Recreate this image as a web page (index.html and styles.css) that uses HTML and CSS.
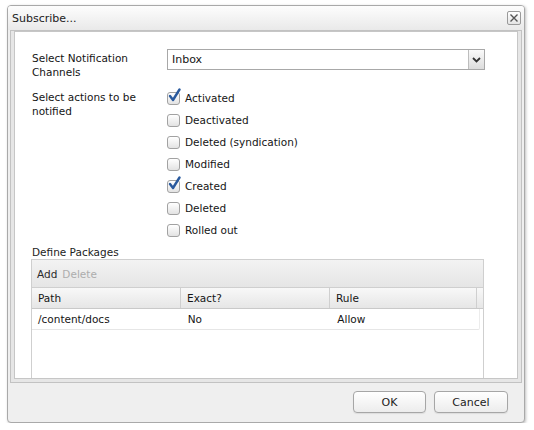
FILE: index.html
```html
<!DOCTYPE html>
<html>
<head>
<meta charset="utf-8">
<title>Subscribe...</title>
<link rel="stylesheet" href="styles.css">
</head>
<body>
<div class="dialog">
  <div class="titlebar">
    <span class="title">Subscribe...</span>
    <span class="close">
      <svg width="10" height="10" viewBox="0 0 10 10"><path d="M1.5 1.5 L8.5 8.5 M8.5 1.5 L1.5 8.5" stroke="#555" stroke-width="1.4" fill="none"/></svg>
    </span>
  </div>
  <div class="body">
    <div class="frame">
      <div class="panel">
        <div class="form-row row-channels">
          <div class="label">Select Notification<br>Channels</div>
          <div class="field">
            <div class="select">
              <span class="select-value">Inbox</span>
              <span class="select-arrow">
                <svg width="9" height="6" viewBox="0 0 9 6"><path d="M1 1 L4.5 4.5 L8 1" stroke="#333" stroke-width="1.8" fill="none"/></svg>
              </span>
            </div>
          </div>
        </div>
        <div class="form-row row-actions">
          <div class="label">Select actions to be<br>notified</div>
          <div class="checks">
            <label class="check"><span class="box checked"><svg width="14" height="15" viewBox="0 0 14 15"><path d="M3 8 L6 12 L12.5 1.5" stroke="#2a5a9e" stroke-width="2.4" fill="none" stroke-linecap="round" stroke-linejoin="round"/></svg></span>Activated</label>
            <label class="check"><span class="box"></span>Deactivated</label>
            <label class="check"><span class="box"></span>Deleted (syndication)</label>
            <label class="check"><span class="box"></span>Modified</label>
            <label class="check"><span class="box checked"><svg width="14" height="15" viewBox="0 0 14 15"><path d="M3 8 L6 12 L12.5 1.5" stroke="#2a5a9e" stroke-width="2.4" fill="none" stroke-linecap="round" stroke-linejoin="round"/></svg></span>Created</label>
            <label class="check"><span class="box"></span>Deleted</label>
            <label class="check"><span class="box"></span>Rolled out</label>
          </div>
        </div>
        <div class="packages">
          <div class="pk-label">Define Packages</div>
          <div class="grid">
            <div class="toolbar"><span class="tb-add">Add</span><span class="tb-del">Delete</span></div>
            <div class="grid-head">
              <div class="hcell c1">Path</div>
              <div class="hcell c2">Exact?</div>
              <div class="hcell c3">Rule</div>
              <div class="hcell c4"></div>
            </div>
            <div class="grid-row">
              <div class="cell c1">/content/docs</div>
              <div class="cell c2">No</div>
              <div class="cell c3">Allow</div>
            </div>
          </div>
        </div>
      </div>
    </div>
  </div>
  <div class="footer">
    <button class="btn btn-ok">OK</button>
    <button class="btn btn-cancel">Cancel</button>
  </div>
</div>
</body>
</html>
```
FILE: styles.css
```css
html, body {
  margin: 0;
  padding: 0;
  background: #ffffff;
}
body {
  font-family: "DejaVu Sans", "Liberation Sans", sans-serif;
  font-size: 10.5px;
  color: #151515;
}
.dialog {
  margin: 5px 0 0 7px;
  width: 518px;
  height: 418px;
  box-sizing: border-box;
  border: 1px solid #a9a9a9;
  border-radius: 4px;
  background: #efefef;
  box-shadow: 1px 1px 3px rgba(0,0,0,0.25);
  display: flex;
  flex-direction: column;
  overflow: hidden;
}
.titlebar {
  height: 24px;
  flex: none;
  display: flex;
  align-items: center;
  justify-content: space-between;
  padding: 0 3px 0 4px;
  background: linear-gradient(#fdfdfd, #e9e9e9);
}
.title {
  font-size: 11px;
  color: #222;
  padding-top: 1px;
}
.close {
  width: 12px;
  height: 12px;
  border: 1px solid #9a9a9a;
  border-radius: 2px;
  background: linear-gradient(#ffffff, #e4e4e4);
  display: flex;
  align-items: center;
  justify-content: center;
  margin-top: -1px;
}
.body {
  flex: none;
  padding: 0 2px;
}
.frame {
  height: 353px;
  box-sizing: border-box;
  border: 1px solid #c2c2c2;
  background: #e6e6e6;
  padding: 0 3px 3px 3px;
}
.panel {
  height: 100%;
  box-sizing: border-box;
  border: 1px solid #c6c6c6;
  background: #ffffff;
  padding: 17px 0 0 17px;
  display: flex;
  flex-direction: column;
}
.form-row {
  display: flex;
}
.label {
  width: 134px;
  flex: none;
  line-height: 14px;
}
.row-channels .label {
  padding-top: 2px;
}
.row-channels {
  height: 38px;
}
.row-actions .label {
  padding-top: 3px;
}
.select {
  width: 316px;
  height: 19px;
  border: 1px solid #a8a8a8;
  background: #fff;
  display: flex;
  align-items: center;
  justify-content: space-between;
  margin-left: 1px;
}
.select-value {
  padding-left: 4px;
  font-size: 11px;
}
.select-arrow {
  width: 15px;
  height: 19px;
  border-left: 1px solid #bdbdbd;
  background: linear-gradient(#fafafa, #dcdcdc);
  display: flex;
  align-items: center;
  justify-content: center;
}
.checks {
  display: flex;
  flex-direction: column;
}
.check {
  height: 22px;
  display: flex;
  align-items: center;
  padding-left: 1px;
}
.box {
  width: 11px;
  height: 11px;
  border: 1px solid #a2a2a2;
  border-radius: 3px;
  background: linear-gradient(#ffffff, #e3e3e3);
  margin-right: 5px;
  position: relative;
  flex: none;
}
.box svg {
  position: absolute;
  left: -1px;
  top: -5px;
}
.packages {
  margin-top: 4px;
  flex: 1;
  display: flex;
  flex-direction: column;
  margin-left: -1px;
}
.pk-label {
  line-height: 14px;
  padding-left: 1px;
  color: #222;
}
.grid {
  flex: 1;
  width: 453px;
  box-sizing: border-box;
  border: 1px solid #cfcfcf;
  border-bottom: none;
  display: flex;
  flex-direction: column;
}
.toolbar {
  height: 27px;
  flex: none;
  display: flex;
  align-items: center;
  padding-left: 5px;
  background: linear-gradient(#f3f3f3, #e5e5e5);
  border-bottom: 1px solid #cfcfcf;
}
.tb-add {
  color: #2b2b2b;
  font-weight: 500;
  margin-right: 5px;
}
.tb-del {
  color: #adadad;
}
.grid-head {
  height: 20px;
  flex: none;
  display: flex;
  background: linear-gradient(#f8f8f8, #e6e6e6);
  border-bottom: 1px solid #c9c9c9;
}
.hcell, .cell {
  box-sizing: border-box;
  padding-left: 6px;
  display: flex;
  align-items: center;
}
.hcell {
  border-right: 1px solid #cfcfcf;
}
.c1 { width: 150px; }
.c2 { width: 150px; }
.c3 { width: 148px; }
.c4 { flex: 1; border-right: none; }
.grid-row {
  height: 21px;
  width: 448px;
  display: flex;
  border-bottom: 1px solid #e6e6e6;
  border-right: 1px solid #ececec;
  border-bottom-right-radius: 2px;
  box-sizing: border-box;
}
.footer {
  flex: 1;
  display: flex;
  justify-content: flex-end;
  align-items: flex-start;
  padding: 8px 16px 0 0;
  gap: 8px;
}
.btn {
  height: 22px;
  border: 1px solid #a6a6a6;
  border-radius: 4px;
  background: linear-gradient(#ffffff, #ececec);
  font-family: "DejaVu Sans", "Liberation Sans", sans-serif;
  font-size: 11px;
  color: #222;
  padding: 0;
  box-shadow: 0 1px 1px rgba(0,0,0,0.08);
}
.btn-ok { width: 73px; }
.btn-cancel { width: 74px; }
```
